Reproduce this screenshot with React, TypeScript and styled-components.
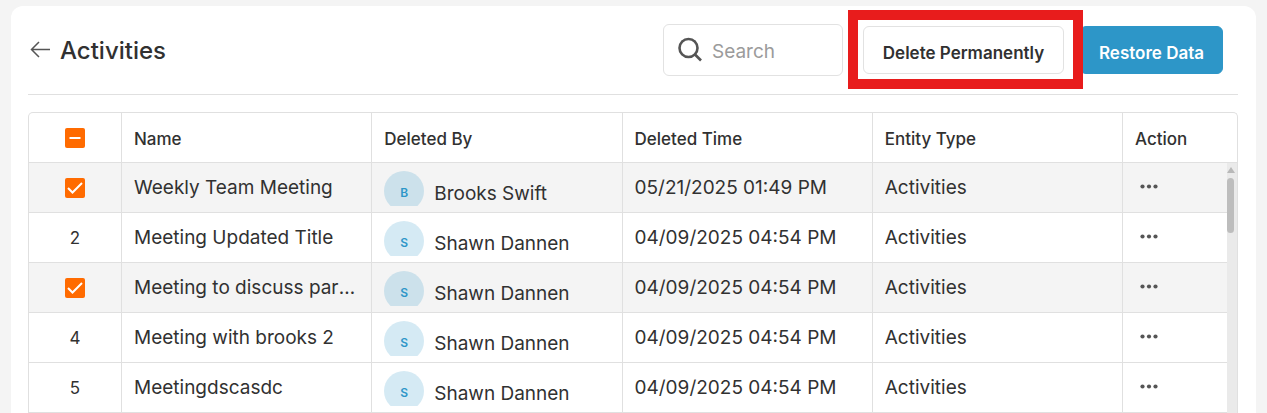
import React, { useEffect, useRef, useState } from 'react';
import styled, { createGlobalStyle } from 'styled-components';

const GlobalStyle = createGlobalStyle`
  *, *::before, *::after { box-sizing: border-box; }
  body {
    margin: 0;
    background: #f4f4f4;
    color: #313131;
    font-family: Inter, "Liberation Sans", sans-serif;
  }
  button, input { font: inherit; color: inherit; }
`;

const Panel = styled.main`
  margin: 6px 11px 0;
  padding: 0 18px 0 17px;
  background: #fff;
  border-radius: 12px 12px 0 0;
`;

const Header = styled.header`
  display: flex;
  align-items: center;
  justify-content: space-between;
  height: 89px;
  padding: 0 15px 0 2px;
  border-bottom: 1px solid #e0e0e0;
`;

const TitleGroup = styled.div`
  display: flex;
  align-items: center;
  gap: 10px;
`;

const BackLink = styled.a`
  display: flex;
  color: #555;
`;

const Title = styled.h1`
  margin: 0;
  padding-top: 2px;
  font-size: 24px;
  font-weight: 500;
  line-height: 32px;
`;

const Actions = styled.div`
  display: flex;
  align-items: center;
  gap: 16px;
`;

const SearchBox = styled.label`
  display: flex;
  align-items: center;
  gap: 8px;
  width: 180px;
  height: 52px;
  margin-right: 4px;
  padding: 0 12px;
  border: 1px solid #e2e2e2;
  border-radius: 6px;
  color: #555;
`;

const SearchInput = styled.input`
  flex: 1;
  min-width: 0;
  padding: 2px 0 0;
  border: 0;
  outline: 0;
  background: transparent;
  font-size: 19px;
  &::placeholder { color: #9b9b9b; opacity: 1; }
`;

const Highlighted = styled.div`
  position: relative;
  z-index: 1;
  &::after {
    content: "";
    position: absolute;
    inset: -16px -19px -15px -15px;
    border: 10px solid #e81c1c;
    pointer-events: none;
  }
`;

const Button = styled.button<{ $primary?: boolean }>`
  display: block;
  width: ${p => (p.$primary ? 143 : 201)}px;
  height: 48px;
  padding: 6px 0 0;
  border: 1px solid ${p => (p.$primary ? '#2d96c8' : '#e2e2e2')};
  border-radius: 6px;
  background: ${p => (p.$primary ? '#2d96c8' : '#fff')};
  color: ${p => (p.$primary ? '#fff' : '#313131')};
  font-size: 17px;
  font-weight: 600;
  white-space: nowrap;
  cursor: pointer;
`;

const TableFrame = styled.div`
  position: relative;
  margin-top: 17px;
  border: 1px solid #e0e0e0;
  border-bottom: 0;
  border-radius: 5px 5px 0 0;
`;

const Table = styled.table`
  width: 100%;
  table-layout: fixed;
  border-collapse: separate;
  border-spacing: 0;
`;

const SelectCol = styled.col`width: 93px;`;
const ActionCol = styled.col`width: 114px;`;

const HeadCell = styled.th<{ $center?: boolean }>`
  height: 50px;
  padding: ${p => (p.$center ? '0' : '3px 12px 0')};
  border-bottom: 1px solid #e0e0e0;
  border-right: 1px solid #e0e0e0;
  font-size: 17px;
  font-weight: 500;
  line-height: 24px;
  text-align: ${p => (p.$center ? 'center' : 'left')};
  &:last-child { border-right: 0; }
`;

const Row = styled.tr<{ $selected: boolean }>`
  background: ${p => (p.$selected ? '#f4f4f4' : '#fff')};
`;

const Cell = styled.td`
  height: 50px;
  padding: 0 12px;
  border-bottom: 1px solid #e0e0e0;
  border-right: 1px solid #e0e0e0;
  overflow: hidden;
  font-size: 19px;
  line-height: 24px;
  text-overflow: ellipsis;
  white-space: nowrap;
  &:last-child { border-right: 0; }
`;

const SelectCell = styled(Cell)`
  padding: 1px 0 0;
  font-size: 17px;
  text-align: center;
`;

const CheckWrap = styled.label`
  display: grid;
  width: 20px;
  margin: 0 auto;
  color: #fff;
  cursor: pointer;
  & > * { grid-area: 1 / 1; }
  & > svg { pointer-events: none; }
`;

const CheckInput = styled.input`
  appearance: none;
  width: 20px;
  height: 20px;
  margin: 0;
  border-radius: 2px;
  background: #ff6b00;
`;

const Person = styled.div`
  display: flex;
  gap: 10px;
  height: 35px;
  margin-top: 2px;
  overflow: hidden;
  line-height: 46px;
`;

const Avatar = styled.span`
  flex: none;
  width: 40px;
  height: 40px;
  border-radius: 50%;
  background: rgba(45, 150, 200, 0.2);
  color: #2d96c8;
  font-size: 12px;
  font-weight: 600;
  line-height: 44px;
  text-align: center;
`;

const MoreButton = styled.button`
  display: flex;
  padding: 3px 4px 5px;
  border: 0;
  background: none;
  color: #555;
  cursor: pointer;
`;

const ScrollTrack = styled.div`
  position: absolute;
  top: 50px;
  right: 0;
  bottom: 0;
  width: 10px;
  background: #eaeaea;
  & > svg { display: block; margin: 4px 0 5px; }
`;

const ScrollThumb = styled.div`
  width: 7px;
  height: 55px;
  border-radius: 4px;
  background: #bdbdbd;
`;

const SelectAll = ({ onChange, mixed }: { onChange: () => void; mixed: boolean }) => {
  const ref = useRef<HTMLInputElement>(null);
  useEffect(() => {
    if (ref.current) ref.current.indeterminate = mixed;
  }, [mixed]);
  return (
    <CheckWrap>
      <CheckInput ref={ref} type="checkbox" aria-label="Select all" onChange={onChange} />
      <svg width="20" height="20" viewBox="0 0 20 20" aria-hidden="true">
        <path d="M4.500 10h11" stroke="currentColor" strokeWidth="2" />
      </svg>
    </CheckWrap>
  );
};

const records = [
  { name: 'Weekly Team Meeting', by: 'Brooks Swift', time: '05/21/2025 01:49 PM' },
  { name: 'Meeting Updated Title', by: 'Shawn Dannen', time: '04/09/2025 04:54 PM' },
  { name: 'Meeting to discuss partnership', by: 'Shawn Dannen', time: '04/09/2025 04:54 PM' },
  { name: 'Meeting with brooks 2', by: 'Shawn Dannen', time: '04/09/2025 04:54 PM' },
  { name: 'Meetingdscasdc', by: 'Shawn Dannen', time: '04/09/2025 04:54 PM' },
];

export default function App() {
  const [selected, setSelected] = useState<number[]>([0, 2]);
  const toggle = (i: number) =>
    setSelected(s => (s.includes(i) ? s.filter(n => n !== i) : [...s, i]));

  return (
    <>
      <GlobalStyle />
      <Panel>
        <Header>
          <TitleGroup>
            <BackLink href="#" aria-label="Back">
              <svg width="20" height="18" viewBox="0 0 20 18" fill="none" stroke="currentColor" strokeWidth="1.5" aria-hidden="true">
                <path d="M20 8.500H2M9 1L1.500 8.500L9 16" />
              </svg>
            </BackLink>
            <Title>Activities</Title>
          </TitleGroup>
          <Actions>
            <SearchBox>
              <svg width="28" height="28" viewBox="0 0 28 28" fill="none" stroke="currentColor" strokeWidth="2.600" aria-hidden="true">
                <circle cx="12.500" cy="12" r="9" />
                <path d="M19 18.500l6 6" />
              </svg>
              <SearchInput type="text" placeholder="Search" aria-label="Search" />
            </SearchBox>
            <Highlighted>
              <Button type="button">Delete Permanently</Button>
            </Highlighted>
            <Button type="button" $primary>Restore Data</Button>
          </Actions>
        </Header>
        <TableFrame>
          <Table>
            <colgroup>
              <SelectCol />
              <col />
              <col />
              <col />
              <col />
              <ActionCol />
            </colgroup>
            <thead>
              <tr>
                <HeadCell $center>
                  <SelectAll
                    mixed={selected.length > 0 && selected.length < records.length}
                    onChange={() => setSelected(selected.length ? [] : records.map((_, i) => i))}
                  />
                </HeadCell>
                <HeadCell>Name</HeadCell>
                <HeadCell>Deleted By</HeadCell>
                <HeadCell>Deleted Time</HeadCell>
                <HeadCell>Entity Type</HeadCell>
                <HeadCell>Action</HeadCell>
              </tr>
            </thead>
            <tbody>
              {records.map((r, i) => (
                <Row key={i} $selected={selected.includes(i)}>
                  <SelectCell onClick={selected.includes(i) ? undefined : () => toggle(i)}>
                    {selected.includes(i) ? (
                      <CheckWrap>
                        <CheckInput type="checkbox" checked onChange={() => toggle(i)} aria-label={`Select ${r.name}`} />
                        <svg width="20" height="20" viewBox="0 0 20 20" fill="none" aria-hidden="true">
                          <path d="M3 10l4.500 4.500L17 5" stroke="currentColor" strokeWidth="2" />
                        </svg>
                      </CheckWrap>
                    ) : (
                      i + 1
                    )}
                  </SelectCell>
                  <Cell>{r.name}</Cell>
                  <Cell>
                    <Person>
                      <Avatar>{r.by[0]}</Avatar>
                      {r.by}
                    </Person>
                  </Cell>
                  <Cell>{r.time}</Cell>
                  <Cell>Activities</Cell>
                  <Cell>
                    <MoreButton type="button" aria-label={`Actions for ${r.name}`}>
                      <svg width="20" height="16" viewBox="0 0 20 16" fill="currentColor" aria-hidden="true">
                        <circle cx="3.500" cy="7.500" r="2.100" />
                        <circle cx="10" cy="7.500" r="2.100" />
                        <circle cx="16.500" cy="7.500" r="2.100" />
                      </svg>
                    </MoreButton>
                  </Cell>
                </Row>
              ))}
            </tbody>
          </Table>
          <ScrollTrack aria-hidden="true">
            <svg width="8" height="6" viewBox="0 0 8 6" fill="#b8b8b8">
              <path d="M4 0L8 6H0Z" />
            </svg>
            <ScrollThumb />
          </ScrollTrack>
        </TableFrame>
      </Panel>
    </>
  );
}
